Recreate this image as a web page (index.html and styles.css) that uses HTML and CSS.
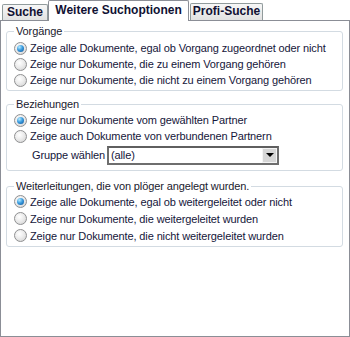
FILE: index.html
```html
<!DOCTYPE html>
<html lang="de">

<head>
  <meta charset="UTF-8">
  <title>Weitere Suchoptionen</title>
  <link rel="stylesheet" href="styles.css">
</head>

<body>

  <div class="tabs">
    <div class="tab tab-suche">Suche</div>
    <div class="tab tab-weitere active">Weitere Suchoptionen</div>
    <div class="tab tab-profi">Profi-Suche</div>
  </div>

  <div class="panel">

    <fieldset class="group">
      <legend>Vorgänge</legend>
      <label class="option"><span class="radio checked"></span>Zeige alle Dokumente, egal ob Vorgang zugeordnet oder nicht</label>
      <label class="option"><span class="radio"></span>Zeige nur Dokumente, die zu einem Vorgang gehören</label>
      <label class="option"><span class="radio"></span>Zeige nur Dokumente, die nicht zu einem Vorgang gehören</label>
    </fieldset>

    <fieldset class="group group-partner">
      <legend>Beziehungen</legend>
      <label class="option"><span class="radio checked"></span>Zeige nur Dokumente vom gewählten Partner</label>
      <label class="option"><span class="radio"></span>Zeige auch Dokumente von verbundenen Partnern</label>
      <div class="select-row">
        <span class="select-label">Gruppe wählen</span>
        <div class="select">
          <span class="select-value">(alle)</span>
          <span class="select-button"><span class="arrow"></span></span>
        </div>
      </div>
    </fieldset>

    <fieldset class="group group-forward">
      <legend>Weiterleitungen, die von plöger angelegt wurden.</legend>
      <label class="option"><span class="radio checked"></span>Zeige alle Dokumente, egal ob weitergeleitet oder nicht</label>
      <label class="option"><span class="radio"></span>Zeige nur Dokumente, die weitergeleitet wurden</label>
      <label class="option"><span class="radio"></span>Zeige nur Dokumente, die nicht weitergeleitet wurden</label>
    </fieldset>

  </div>

</body>

</html>
```

FILE: styles.css
```css
html,
body {
  margin: 0;
  padding: 0;
}

body {
  width: 350px;
  height: 337px;
  display: flex;
  flex-direction: column;
  background-color: #FFFFFF;
  font-family: "Liberation Sans", Arial, sans-serif;
  font-size: 11px;
  letter-spacing: -0.12px;
  color: #15163a;
}

/* tab strip */
.tabs {
  display: flex;
  align-items: flex-end;
  height: 20px;
  padding-left: 2px;
  position: relative;
  z-index: 1;
}

.tab {
  box-sizing: border-box;
  height: 17px;
  border: 1px solid #919b9c;
  border-bottom: none;
  border-radius: 2px 2px 0 0;
  background: linear-gradient(#f7f7f7, #e2e2e2);
  font-weight: bold;
  font-size: 12px;
  letter-spacing: 0;
  line-height: 15px;
  text-align: center;
  color: #111133;
}

.tab-suche {
  width: 46px;
  height: 16px;
}

.tab-weitere {
  width: 141px;
}

.tab-profi {
  width: 73px;
  margin-left: 1px;
}

.tab.active {
  height: 21px;
  margin-bottom: -1px;
  background: #FFFFFF;
  line-height: 19px;
  border-color: #8c8f97;
}

/* content panel */
.panel {
  flex: 1;
  border: 1px solid #8b8e96;
  padding-top: 4px;
}

.group {
  margin: 0 6px 0 5px;
  padding: 2px 6px 2px 7px;
  border: 1px solid #d3dbe2;
  border-radius: 3px;
}

.group legend {
  margin-left: 0;
  padding: 0 2px;
  line-height: 13px;
  color: #1a1a2e;
}

.group-partner {
  margin-top: 7px;
  padding-top: 1px;
  padding-bottom: 5px;
}

.group-forward {
  margin-top: 9px;
  padding-top: 0;
  padding-bottom: 2px;
}

.option {
  display: flex;
  align-items: center;
  height: 16px;
  white-space: nowrap;
}

.group-forward .option {
  height: 17px;
}

/* radio buttons */
.radio {
  box-sizing: border-box;
  width: 13px;
  height: 13px;
  margin-right: 3px;
  flex: none;
  border: 1px solid #8f9091;
  border-radius: 50%;
  background: radial-gradient(circle at 40% 35%, #ffffff 0%, #ececec 45%, #cfcfcf 100%);
  position: relative;
}

.radio.checked::after {
  content: "";
  position: absolute;
  left: 2px;
  top: 2px;
  width: 7px;
  height: 7px;
  border-radius: 50%;
  background: radial-gradient(circle at 35% 30%, #b8ecff 0%, #3c9de0 45%, #0b4f93 100%);
}

/* group select */
.select-row {
  display: flex;
  align-items: center;
  height: 20px;
  margin-top: 1px;
  padding-left: 18px;
}

.select-label {
  width: 75px;
  white-space: nowrap;
}

.select {
  box-sizing: border-box;
  width: 172px;
  height: 19px;
  display: flex;
  align-items: center;
  border: 2px solid #6e6e6e;
  border-top-color: #5f5f5f;
  background-color: #FFFFFF;
}

.select-value {
  flex: 1;
  padding-left: 2px;
}

.select-button {
  box-sizing: border-box;
  width: 15px;
  height: 15px;
  display: flex;
  align-items: center;
  justify-content: center;
  border: 1px solid #f4f4f4;
  background-color: #d6d6d6;
}

.arrow {
  width: 0;
  height: 0;
  border-left: 4px solid transparent;
  border-right: 4px solid transparent;
  border-top: 4px solid #000000;
}
```
